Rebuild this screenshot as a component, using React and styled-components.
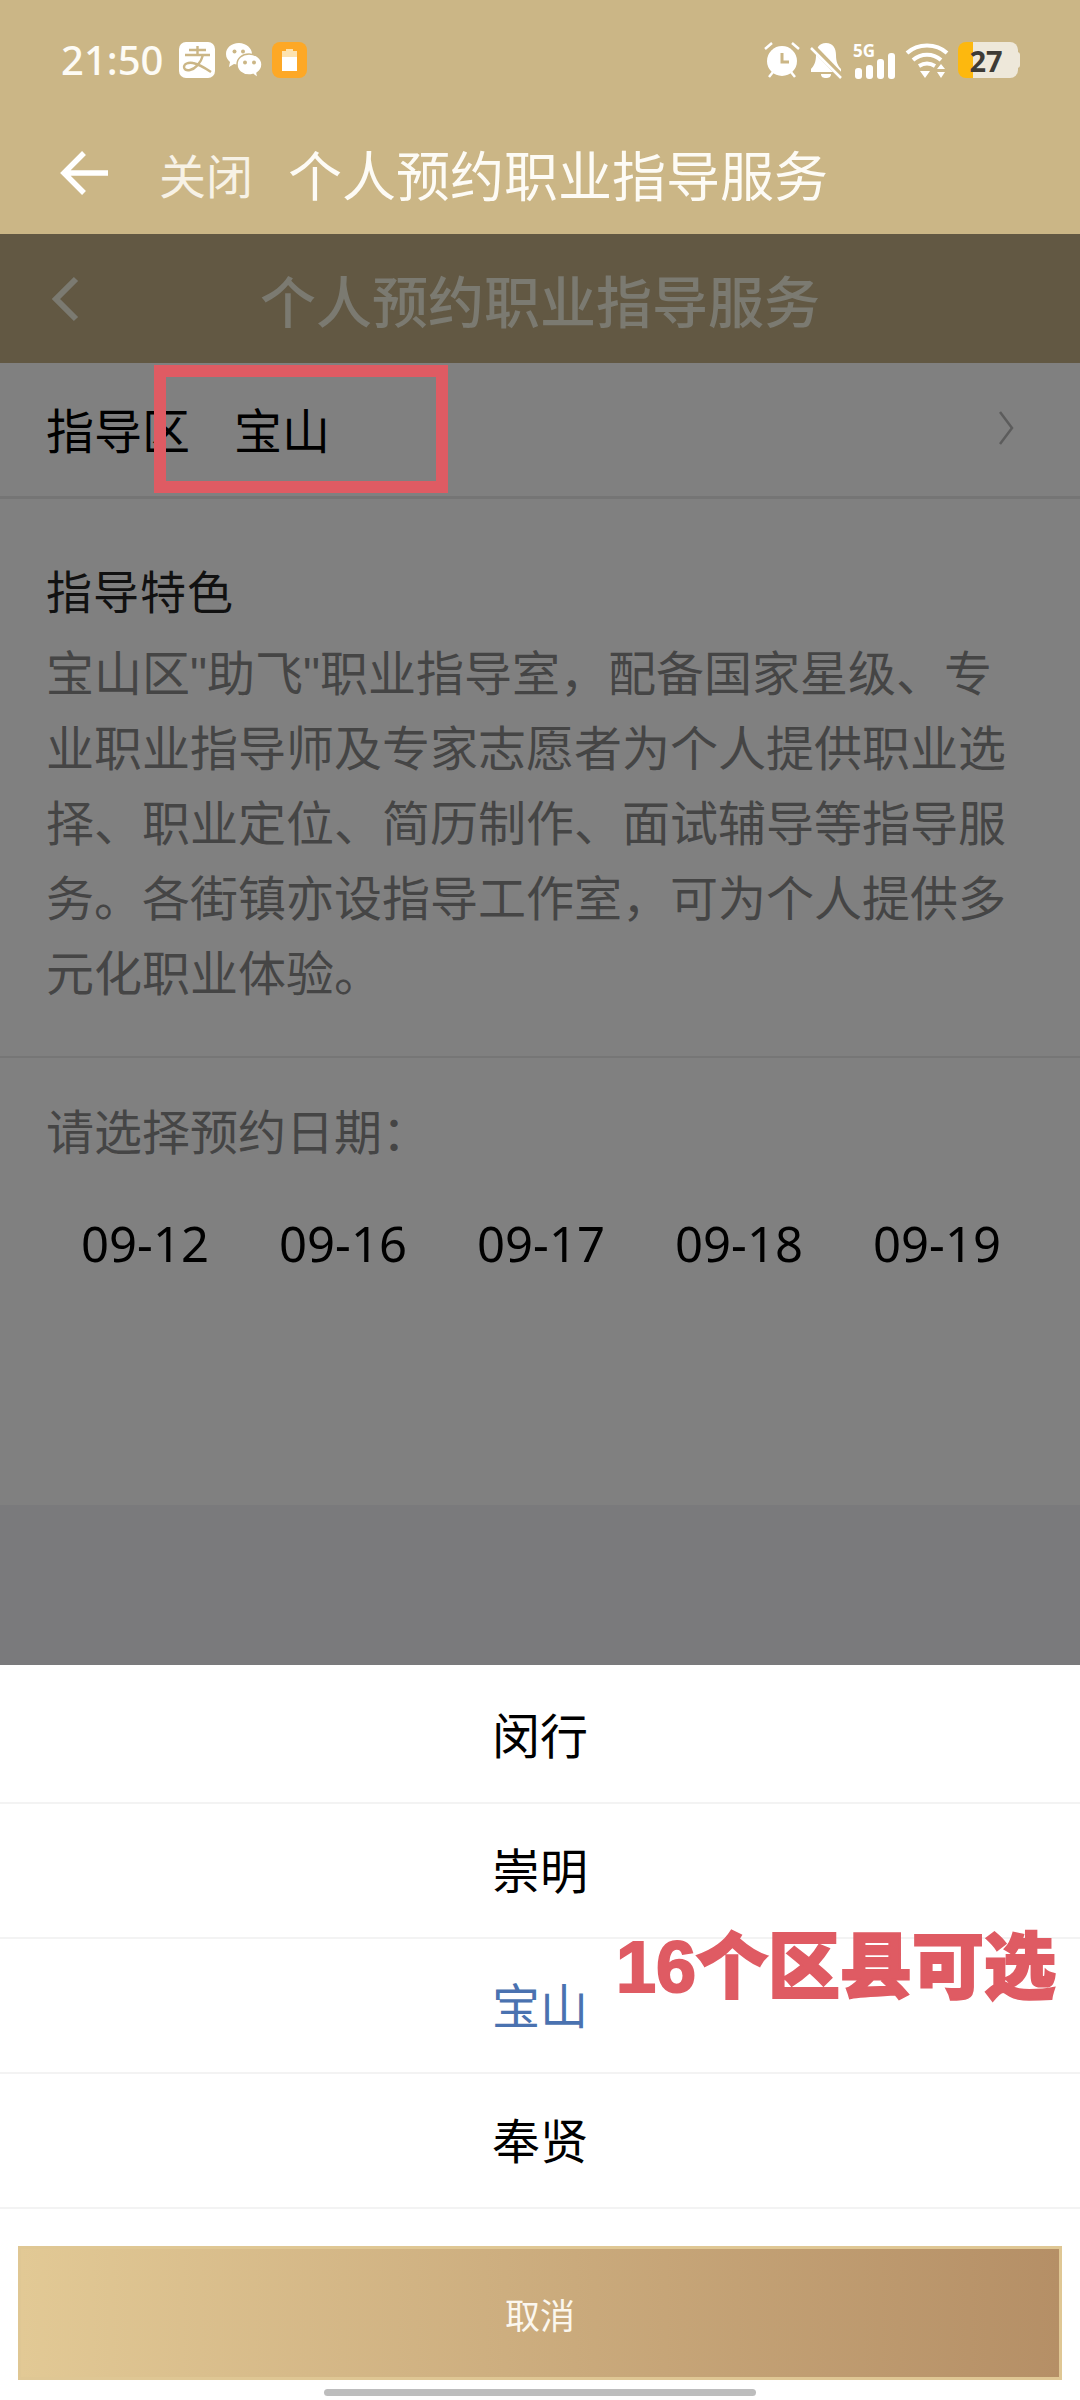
import React from 'react';
import styled, { createGlobalStyle } from 'styled-components';

const GlobalStyle = createGlobalStyle`
  html, body { margin: 0; padding: 0; background: #7a7a7c; }
  * { box-sizing: border-box; }
  body { font-family: "Noto Sans", "Noto Sans CJK SC", sans-serif; }
`;

const Page = styled.div`
  position: relative;
  display: flex;
  flex-direction: column;
  width: 1080px;
  height: 2400px;
  overflow: hidden;
  font-family: "Noto Sans CJK SC", "Noto Sans", sans-serif;
`;

const Top = styled.header`
  height: 234px;
  padding-top: 42px;
  background: #cbb686;
  color: #fff;
`;

const StatusBar = styled.div`
  display: flex;
  align-items: center;
  justify-content: space-between;
  height: 36px;
  padding: 0 60px 0 61px;
`;

const StatusGroup = styled.div`
  display: flex;
  align-items: center;
  gap: ${p => p.$gap || 10}px;
`;

const Time = styled.span`
  width: 108px;
  font-family: "Noto Sans", sans-serif;
  font-size: 40px;
  font-weight: 500;
  line-height: 36px;
  color: #fdfbf5;
`;

const Signal = styled.div`
  position: relative;
  width: 44px;
  height: 37px;
`;

const SignalLabel = styled.span`
  position: absolute;
  left: 1px;
  top: 0;
  font-family: "Noto Sans", sans-serif;
  font-size: 17px;
  font-weight: 700;
  line-height: 17px;
  color: #fff;
`;

const Battery = styled.div`
  display: flex;
  align-items: center;
  justify-content: center;
  width: 60px;
  height: 36px;
  padding-right: 4px;
  border-radius: 8px;
  background: linear-gradient(90deg, #fdb80e 0 15px, #eee8da 15px);
  font-family: "Noto Sans", sans-serif;
  font-size: 29px;
  font-weight: 700;
  color: #3e3b35;
`;

const BatteryTip = styled.i`
  width: 3px;
  height: 16px;
  margin-left: -10px;
  border-radius: 0 3px 3px 0;
  background: #eee8da;
`;

const AppBar = styled.div`
  display: flex;
  align-items: center;
  height: 118px;
  margin-top: 36px;
  padding-left: 60px;
`;

const CloseLabel = styled.span`
  margin-left: 51px;
  font-size: 47px;
  font-weight: 400;
  color: #f7f2e6;
`;

const AppTitle = styled.h1`
  margin: 0 0 0 35px;
  font-size: 54px;
  font-weight: 400;
  color: #fdfbf5;
`;

const NavBar = styled.div`
  position: relative;
  display: flex;
  align-items: center;
  justify-content: center;
  height: 129px;
  background: #625843;
`;

const NavBack = styled.svg`
  position: absolute;
  left: 50px;
  top: 42px;
`;

const NavTitle = styled.h2`
  margin: 0;
  font-size: 56px;
  font-weight: 500;
  color: #7b7a71;
`;

const Body = styled.main`
  height: 1142px;
  background: #808080;
  color: #000;
`;

const PickerRow = styled.div`
  display: flex;
  align-items: center;
  height: 136px;
  padding: 0 66px 3px 46px;
  border-bottom: 3px solid #757575;
  font-size: 48px;
`;

const PickerValue = styled.span`
  flex: 1;
  margin-left: 44px;
`;

const Intro = styled.section`
  height: 559px;
  padding: 58px 46px 0;
  border-bottom: 2px solid #767676;
`;

const IntroTitle = styled.div`
  margin-bottom: 16px;
  font-size: 46px;
  line-height: 64px;
  letter-spacing: 1px;
  color: #111;
`;

const IntroText = styled.p`
  margin: 0;
  font-family: "Liberation Sans", "Noto Sans CJK SC", sans-serif;
  font-size: 48px;
  line-height: 75px;
  color: #454545;
`;

const DateSection = styled.section`
  padding: 39px 46px 0;
`;

const DateLabel = styled.div`
  font-size: 48px;
  line-height: 64px;
  color: #454545;
`;

const DateGrid = styled.div`
  display: grid;
  grid-template-columns: repeat(5, 198px);
  margin-top: 50px;
`;

const DateItem = styled.span`
  font-family: "Noto Sans", sans-serif;
  font-size: 49px;
  line-height: 64px;
  text-align: center;
`;

const Spacer = styled.div`
  height: 160px;
  background: #7a7a7c;
`;

const Sheet = styled.div`
  flex: 1;
  padding-top: 4px;
  background: #fff;
`;

const SheetItem = styled.div`
  display: flex;
  align-items: center;
  justify-content: center;
  height: 135px;
  padding-bottom: 6px;
  border-bottom: 2px solid #f3f3f3;
  font-size: 48px;
  color: ${p => (p.$active ? '#4a72b0' : '#000')};
`;

const CancelButton = styled.button`
  display: block;
  width: 1044px;
  height: 134px;
  margin: 37px 18px 0;
  padding: 0;
  border: 3px solid #dfc794;
  background: linear-gradient(90deg, #e2c995, #b58f66);
  color: #fbf7ee;
  font-family: inherit;
  font-size: 35px;
`;

const HomeBar = styled.div`
  position: absolute;
  left: 324px;
  bottom: 4px;
  width: 432px;
  height: 7px;
  border-radius: 4px;
  background: #bdbdbd;
`;

const RedBox = styled.div`
  position: absolute;
  left: 154px;
  top: 365px;
  width: 294px;
  height: 128px;
  border: 12px solid #df5b63;
`;

const RedNote = styled.div`
  position: absolute;
  left: 616px;
  top: 1925px;
  font-family: "Liberation Sans", "Noto Sans CJK SC", sans-serif;
  font-size: 72px;
  font-weight: 900;
  line-height: 84px;
  white-space: nowrap;
  color: #df5b63;
  -webkit-text-stroke: 2px #df5b63;
`;

const AlipayIcon = () => (
  <svg width="36" height="36" viewBox="0 0 36 36">
    <rect width="36" height="36" rx="7" fill="#fff" />
    <path d="M10 8h17M18.500 4v9M6 13h25M24 13c-2 8-8 14-13 15-4 1-6-1-6-3 0-3 4-5 9-4 6 1 12 5 18 9" fill="none" stroke="#cbb686" strokeWidth="2.400" />
  </svg>
);

const WechatIcon = () => (
  <svg width="37" height="37" viewBox="0 0 37 37">
    <path d="M14 1C6 1 1 6 1 12c0 4 2 6 4 8l-1 5 5-3c2 .6 3 .7 5 .7C21 23 27 18 27 12 27 6 21 1 14 1z" fill="#fff" />
    <circle cx="9.500" cy="9.500" r="2" fill="#cbb686" />
    <circle cx="18" cy="9.500" r="2" fill="#cbb686" />
    <path d="M24 12c-7 0-12 4.500-12 10.500S17 33 24 33c1.500 0 2.500-.2 4-.6l5 3.600-1-5c3-2 5-5 5-8.500C37 16.500 31 12 24 12z" fill="#fff" stroke="#cbb686" strokeWidth="1.500" />
    <circle cx="20" cy="20.500" r="2" fill="#cbb686" />
    <circle cx="29" cy="20.500" r="2" fill="#cbb686" />
  </svg>
);

const ChargeIcon = () => (
  <svg width="35" height="36" viewBox="0 0 35 36">
    <rect width="35" height="36" rx="8" fill="#fda826" />
    <path d="M14 7h7v2h4v20H10V9h4z" fill="#fde3b0" />
    <rect x="10" y="15" width="15" height="14" fill="#fff" />
  </svg>
);

const AlarmIcon = () => (
  <svg width="38" height="38" viewBox="0 0 38 38" fill="#fff">
    <circle cx="19" cy="20" r="15" />
    <path d="M19 12v9h7" fill="none" stroke="#cbb686" strokeWidth="3" />
    <path d="M2 8l7-6M36 8l-7-6M6 36l4-5M32 36l-4-5" fill="none" stroke="#fff" strokeWidth="2.500" />
  </svg>
);

const BellIcon = () => (
  <svg width="33" height="37" viewBox="0 0 33 37">
    <path d="M16 1c7 0 10 5 10 12 0 7 2 11 5 14v3H1v-3c3-3 5-7 5-14C6 6 9 1 16 1zM11 32h10c0 3-2 4-5 4s-5-1-5-4z" fill="#fff" />
    <path d="M2 4l29 30" stroke="#cbb686" strokeWidth="6" />
    <path d="M1 6l30 30" stroke="#fff" strokeWidth="2.500" />
  </svg>
);

const SignalBars = () => (
  <svg width="44" height="37" viewBox="0 0 44 37" fill="#fff">
    <rect x="3" y="26" width="7" height="11" rx="3" />
    <rect x="14" y="23" width="7" height="14" rx="3" />
    <rect x="25" y="17" width="7" height="20" rx="3" />
    <rect x="36" y="11" width="7" height="26" rx="3" />
  </svg>
);

const WifiIcon = () => (
  <svg width="44" height="37" viewBox="0 0 44 37" fill="none" stroke="#fff" strokeWidth="4">
    <path d="M2 11C13 1 31 1 42 11" />
    <path d="M8 18c8-7 20-7 28 0" />
    <path d="M14 24c5-3 11-3 16 0" />
    <path d="M15 29h10l-5 7zM32 27l4-5 4 5zM32 30h8l-4 6z" fill="#fff" stroke="none" />
  </svg>
);

const BackArrow = () => (
  <svg width="48" height="44" viewBox="0 0 48 44" fill="none" stroke="#fff" strokeWidth="5.500">
    <path d="M48 22H4M24 2L4 22l20 20" />
  </svg>
);

const Chevron = () => (
  <svg width="16" height="36" viewBox="0 0 16 36" fill="none" stroke="#5c5c5c" strokeWidth="2.500">
    <path d="M2 2l12 16L2 34" />
  </svg>
);

const App = () => {
  const dates = ['09-12', '09-16', '09-17', '09-18', '09-19'];
  const areas = ['闵行', '崇明', '宝山', '奉贤'];

  return (
    <Page>
      <GlobalStyle />
      <Top>
        <StatusBar>
          <StatusGroup>
            <Time>21:50</Time>
            <AlipayIcon />
            <WechatIcon />
            <ChargeIcon />
          </StatusGroup>
          <StatusGroup $gap={9}>
            <AlarmIcon />
            <BellIcon />
            <Signal>
              <SignalLabel>5G</SignalLabel>
              <SignalBars />
            </Signal>
            <WifiIcon />
            <Battery>27</Battery>
            <BatteryTip />
          </StatusGroup>
        </StatusBar>
        <AppBar>
          <BackArrow />
          <CloseLabel>关闭</CloseLabel>
          <AppTitle>个人预约职业指导服务</AppTitle>
        </AppBar>
      </Top>
      <NavBar>
        <NavBack width="30" height="46" viewBox="0 0 30 46" fill="none" stroke="#7b7a71" strokeWidth="6">
          <path d="M26 3L6 23l20 20" />
        </NavBack>
        <NavTitle>个人预约职业指导服务</NavTitle>
      </NavBar>
      <Body>
        <PickerRow>
          指导区
          <PickerValue>宝山</PickerValue>
          <Chevron />
        </PickerRow>
        <Intro>
          <IntroTitle>指导特色</IntroTitle>
          <IntroText>
            宝山区"助飞"职业指导室，配备国家星级、专业职业指导师及专家志愿者为个人提供职业选择、职业定位、简历制作、面试辅导等指导服务。各街镇亦设指导工作室，可为个人提供多元化职业体验。
          </IntroText>
        </Intro>
        <DateSection>
          <DateLabel>请选择预约日期：</DateLabel>
          <DateGrid>
            {dates.map(d => <DateItem key={d}>{d}</DateItem>)}
          </DateGrid>
        </DateSection>
      </Body>
      <Spacer />
      <Sheet>
        {areas.map(a => <SheetItem key={a} $active={a === '宝山'}>{a}</SheetItem>)}
        <CancelButton>取消</CancelButton>
      </Sheet>
      <HomeBar />
      <RedBox />
      <RedNote>16个区县可选</RedNote>
    </Page>
  );
};

export default App;
